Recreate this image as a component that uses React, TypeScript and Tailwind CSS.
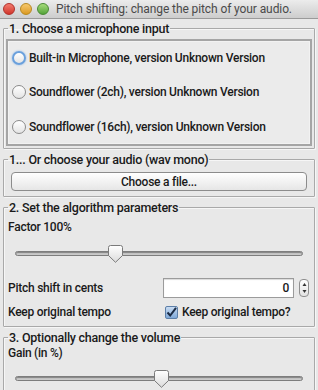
import React from "react";

const F = { fontFamily: 'Roboto, "Liberation Sans", sans-serif' };

function Radio({ focused }: { focused?: boolean }) {
  return (
    <span
      className={
        "inline-block w-[14px] h-[14px] rounded-full bg-gradient-to-b from-white to-[#e4e4e4] " +
        (focused
          ? "border-[2px] border-[#6aa0dc] shadow-[0_0_2px_#7fb0ea]"
          : "border border-[#8a8a8a]")
      }
    />
  );
}

function Slider({ pos }: { pos: number }) {
  return (
    <div className="relative h-[20px] mx-[9px]">
      <div className="absolute left-0 right-0 top-[6px] h-[5px] rounded-full bg-[#c9c9c9] border border-[#7d7d7d] shadow-[inset_0_1px_1px_rgba(0,0,0,0.35)]" />
      <svg
        className="absolute top-[0px]"
        style={{ left: pos - 7 }}
        width="15"
        height="18"
        viewBox="0 0 15 18"
      >
        <defs>
          <linearGradient id="tg" x1="0" y1="0" x2="0" y2="1">
            <stop offset="0" stopColor="#ffffff" />
            <stop offset="1" stopColor="#dcdcdc" />
          </linearGradient>
        </defs>
        <path
          d="M2.5 0.5 H12.5 Q14.5 0.5 14.5 2.5 V10.5 L7.5 17.3 L0.5 10.5 V2.5 Q0.5 0.5 2.5 0.5 Z"
          fill="url(#tg)"
          stroke="#7a7a7a"
        />
      </svg>
    </div>
  );
}

function Group({
  title,
  className,
  children,
}: {
  title: string;
  className?: string;
  children: React.ReactNode;
}) {
  return (
    <fieldset
      className={
        "border border-[#a9a9a9] shadow-[inset_1px_1px_0_#f6f6f6,1px_1px_0_#f6f6f6] rounded-[1px] px-[2px] " +
        (className ?? "")
      }
    >
      <legend className="ml-[2px] px-[1px] text-[12.5px] leading-[15px] text-[#1a1a1a] font-medium whitespace-nowrap">
        {title}
      </legend>
      {children}
    </fieldset>
  );
}

export default function App() {
  return (
    <div
      className="w-[318px] h-[390px] overflow-hidden bg-[#e8e8e8] text-[#1a1a1a] tracking-[-0.25px]"
      style={F}
    >
      {/* title bar */}
      <div className="h-[19px] flex items-center bg-gradient-to-b from-[#ececec] to-[#cdcdcd] border-b border-[#9a9a9a]">
        <div className="flex items-center gap-[5px] pl-[3px] shrink-0">
          <span className="w-[12px] h-[12px] rounded-full bg-gradient-to-b from-[#f37a6d] to-[#d0332a] border border-[#b0302a]" />
          <span className="w-[12px] h-[12px] rounded-full bg-gradient-to-b from-[#f7c86a] to-[#db9a1e] border border-[#b88820]" />
          <span className="w-[12px] h-[12px] rounded-full bg-gradient-to-b from-[#a6dc7a] to-[#54a43a] border border-[#4a8a34]" />
        </div>
        <div className="ml-[7px] text-[12px] text-[#4a4a4a] whitespace-nowrap tracking-[-0.1px]">
          Pitch shifting: change the pitch of your audio.
        </div>
      </div>

      <div className="px-[3px] pt-[2px] flex flex-col gap-[3px]">
        <Group title="1. Choose a microphone input" className="pb-[2px]">
          <div className="mt-[3px] border-2 border-[#a5a5a5] shadow-[inset_0_0_0_1px_#f2f2f2] bg-[#ebebeb] h-[107px] flex flex-col justify-around pl-[4px] text-[12px] font-medium">
            <div className="flex items-center gap-[3px]">
              <Radio focused />
              <span>Built-in Microphone, version Unknown Version</span>
            </div>
            <div className="flex items-center gap-[3px]">
              <Radio />
              <span>Soundflower (2ch), version Unknown Version</span>
            </div>
            <div className="flex items-center gap-[3px]">
              <Radio />
              <span>Soundflower (16ch), version Unknown Version</span>
            </div>
          </div>
        </Group>

        <Group title="1... Or choose your audio (wav mono)" className="pb-[5px]">
          <div className="mx-[5px] mt-[5px] h-[19px] rounded-[4px] border border-[#8c8c8c] bg-gradient-to-b from-white to-[#e6e6e6] flex items-center justify-center text-[12px] font-medium">
            Choose a file...
          </div>
        </Group>

        <Group title="2. Set the algorithm parameters" className="pb-[5px] text-[12px] font-medium">
          <div className="mt-[3px] pl-[2px]">Factor 100%</div>
          <div className="mt-[9px]">
            <Slider pos={100} />
          </div>
          <div className="mt-[13px] flex items-center">
            <span className="pl-[2px] flex-1">Pitch shift in cents</span>
            <div className="w-[131px] h-[20px] bg-white border border-[#9b9b9b] shadow-[inset_0_1px_1px_rgba(0,0,0,0.15)] flex items-center justify-end pr-[4px]">
              0
            </div>
            <div className="ml-[5px] mr-[3px] w-[10px] h-[18px] rounded-[4px] border border-[#8f8f8f] bg-gradient-to-b from-white to-[#e2e2e2] flex flex-col items-center justify-center leading-none">
              <svg width="5" height="14" viewBox="0 0 5 14">
                <path d="M2.5 2 L4.5 5 H0.5 Z" fill="#333" />
                <path d="M2.5 12 L4.5 9 H0.5 Z" fill="#333" />
              </svg>
            </div>
          </div>
          <div className="mt-[5px] flex items-center">
            <span className="pl-[2px] w-[159px]">Keep original tempo</span>
            <span className="w-[13px] h-[13px] rounded-[2px] border border-[#5d7fa8] bg-gradient-to-b from-[#c9dcf2] to-[#7fa8d8] flex items-center justify-center">
              <svg width="11" height="11" viewBox="0 0 11 11">
                <path d="M1.5 5.5 L4.2 8.5 L10 0.8" fill="none" stroke="#1b2b44" strokeWidth="2" />
              </svg>
            </span>
            <span className="ml-[4px]">Keep original tempo?</span>
          </div>
        </Group>

        <Group title="3. Optionally change the volume" className="pb-[4px] text-[12px] font-medium">
          <div className="-mt-[1px] pl-[2px]">Gain (in %)</div>
          <div className="mt-[8px]">
            <Slider pos={146} />
          </div>
        </Group>
      </div>
    </div>
  );
}
